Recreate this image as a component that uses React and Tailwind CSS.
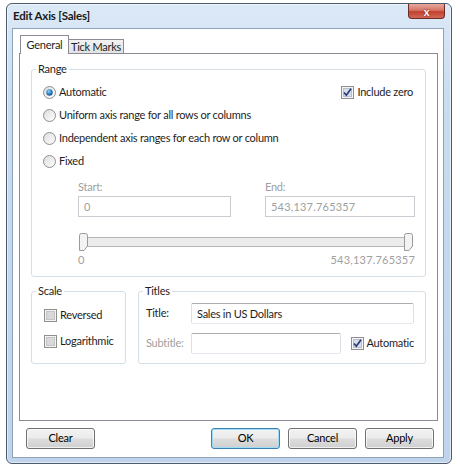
const FONT = "font-['Lato','Liberation_Sans',Arial,sans-serif]";

function Radio({ checked }) {
  return (
    <svg width="13" height="13" viewBox="0 0 13 13" className="shrink-0">
      <defs>
        <linearGradient id={checked ? "rg-on" : "rg-off"} x1="0" y1="0" x2="1" y2="1">
          <stop offset="0" stopColor="#dcdcdc" />
          <stop offset="1" stopColor="#ffffff" />
        </linearGradient>
        <radialGradient id="dot" cx="0.4" cy="0.35" r="0.7">
          <stop offset="0" stopColor="#9fd6f6" />
          <stop offset="0.5" stopColor="#2a8ad0" />
          <stop offset="1" stopColor="#1b4f80" />
        </radialGradient>
      </defs>
      <circle cx="6.5" cy="6.5" r="6" fill={`url(#${checked ? "rg-on" : "rg-off"})`} stroke="#8e8f8f" />
      {checked && <circle cx="6.5" cy="6.5" r="3.2" fill="url(#dot)" />}
    </svg>
  );
}

function Check({ checked }) {
  return (
    <svg width="13" height="13" viewBox="0 0 13 13" className="shrink-0">
      <rect x="0.5" y="0.5" width="12" height="12" fill="#f4f4f4" stroke="#8e8f8f" />
      <rect x="2.5" y="2.5" width="8" height="8" fill={checked ? "#d7dde8" : "#d9d9d9"} stroke={checked ? "#b6bfce" : "#c4c4c4"} />
      {checked && (
        <path d="M3 6.5 L5.3 9.2 L10 2.8" fill="none" stroke="#253a7a" strokeWidth="1.7" />
      )}
    </svg>
  );
}

function Thumb() {
  return (
    <svg width="9" height="18" viewBox="0 0 9 18">
      <path
        d="M0.5 2.5 Q0.5 0.5 2.5 0.5 H6.5 Q8.5 0.5 8.5 2.5 V13 L5 17.5 H0.5 Z"
        fill="#f3f3f3"
        stroke="#9a9a9a"
      />
    </svg>
  );
}

function Button({ children, primary }) {
  return (
    <button
      className={`w-[69px] h-[21px] rounded-[3px] border text-[11px] text-black bg-[linear-gradient(180deg,#f2f2f2_0%,#ebebeb_48%,#dddddd_52%,#cfcfcf_100%)] ${
        primary ? "border-[#3c7fb1] shadow-[inset_0_0_0_1px_#9fdcf5]" : "border-[#707070] shadow-[inset_0_0_0_1px_rgba(255,255,255,0.7)]"
      }`}
    >
      {children}
    </button>
  );
}

function Group({ label, className, children }) {
  return (
    <fieldset className={`min-w-0 border border-[#d5dfe5] rounded-[3px] ${className}`}>
      <legend className="ml-[4px] px-[2px] leading-[16px]">{label}</legend>
      {children}
    </fieldset>
  );
}

export default function App() {
  return (
    <div className={`w-[460px] h-[470px] bg-white pl-[6px] pt-[3px] text-[11px] tracking-[-0.25px] text-[#1e1e1e] ${FONT}`}>
      <div className="w-[446px] h-[461px] rounded-[6px] border border-[#4b5a6b] bg-[linear-gradient(180deg,#dce9f7_0%,#c9dcf0_20%,#bfd4eb_100%)] shadow-[inset_0_0_0_1px_rgba(255,255,255,0.55)] flex flex-col pl-[5px] pr-[7px] pb-[5px]">
        {/* title bar */}
        <div className="h-[24px] flex justify-between items-start shrink-0">
          <span className="pl-[1px] pt-[5px] leading-[14px] text-[11.5px] tracking-[-0.2px] font-bold text-[#1a1a1a]">
            Edit Axis [Sales]
          </span>
          <div className="w-[37px] h-[15px] mr-[-1px] rounded-b-[4px] border border-t-0 border-[#6c2b24] bg-[linear-gradient(180deg,#e8a89d_0%,#d47467_45%,#c2402f_55%,#d16a55_100%)] flex items-center justify-center">
            <span className="text-white font-bold text-[11px] leading-[11px] [text-shadow:0_0_2px_#5a1a14]">x</span>
          </div>
        </div>

        {/* client area */}
        <div className="flex-1 border border-[#8ea2b8] bg-white flex flex-col pt-[6px] pl-[6px] pr-[5px] pb-[8px]">
          {/* tabs */}
          <div className="h-[19px] mb-[-1px] flex items-end pl-[1px] whitespace-nowrap">
            <div className="relative z-10 w-[49px] h-[19px] border border-b-0 border-[#898c95] bg-white text-center leading-[17px]">
              General
            </div>
            <div className="ml-[-1px] mb-[1px] w-[56px] h-[14px] border border-b-0 border-[#898c95] bg-[linear-gradient(180deg,#f2f2f2,#e3e3e3)] text-center leading-[14px]">
              Tick Marks
            </div>
          </div>

          {/* panel */}
          <div className="h-[368px] border border-[#898c95] bg-white pt-[7px] px-[11px]">
            <Group label="Range" className="pb-[9px]">
              <div className="pt-[6px] pl-[11px] pr-[12px] flex flex-col gap-[5px]">
                <div className="h-[18px] flex items-center justify-between">
                  <label className="flex items-center gap-[3px]">
                    <Radio checked />
                    <span>Automatic</span>
                  </label>
                  <label className="flex items-center gap-[3px]">
                    <Check checked />
                    <span>Include zero</span>
                  </label>
                </div>
                <label className="h-[18px] flex items-center gap-[3px]">
                  <Radio />
                  <span>Uniform axis range for all rows or columns</span>
                </label>
                <label className="h-[18px] flex items-center gap-[3px]">
                  <Radio />
                  <span>Independent axis ranges for each row or column</span>
                </label>
                <label className="h-[18px] flex items-center gap-[3px]">
                  <Radio />
                  <span>Fixed</span>
                </label>
              </div>

              <div className="mt-[10px] ml-[46px] mr-[10px] flex gap-[34px]">
                <div className="w-[153px]">
                  <div className="h-[14px] leading-[14px] text-[#a0a0a0]">Start:</div>
                  <div className="mt-[2px] h-[21px] border border-[#c9ccd1] px-[5px] leading-[19px] text-[#a0a0a0]">0</div>
                </div>
                <div className="flex-1">
                  <div className="h-[14px] leading-[14px] text-[#a0a0a0]">End:</div>
                  <div className="mt-[2px] h-[21px] border border-[#c9ccd1] px-[5px] leading-[19px] text-[#a0a0a0] tracking-[0.2px]">
                    543,137.765357
                  </div>
                </div>
              </div>

              <div className="relative mt-[16px] ml-[47px] mr-[12px] h-[18px]">
                <div className="absolute left-[1px] right-0 top-[4px] h-[10px] border border-[#b5b5b5] bg-[#ececec]" />
                <div className="absolute left-0 top-0">
                  <Thumb />
                </div>
                <div className="absolute right-0 top-0">
                  <Thumb />
                </div>
              </div>

              <div className="mt-[2px] ml-[46px] mr-[10px] h-[14px] leading-[14px] flex justify-between text-[#a0a0a0] tracking-[0.2px]">
                <span>0</span>
                <span>543,137.765357</span>
              </div>
            </Group>

            <div className="mt-[6px] flex gap-[12px]">
              <Group label="Scale" className="w-[95px] h-[81px] shrink-0">
                <div className="pt-[7px] pl-[12px] flex flex-col gap-[8px]">
                  <label className="h-[18px] flex items-center gap-[3px]">
                    <Check />
                    <span>Reversed</span>
                  </label>
                  <label className="h-[18px] flex items-center gap-[3px]">
                    <Check />
                    <span>Logarithmic</span>
                  </label>
                </div>
              </Group>

              <Group label="Titles" className="w-[288px] h-[81px] shrink-0">
                <div className="pt-[4px] pl-[7px] pr-[11px] flex flex-col gap-[9px]">
                  <div className="flex items-center">
                    <span className="w-[45px]">Title:</span>
                    <div className="flex-1 h-[21px] border border-[#abadb3] border-l-[#dbdfe6] border-r-[#dbdfe6] border-b-[#e3e9ef] rounded-[2px] px-[5px] leading-[19px]">
                      Sales in US Dollars
                    </div>
                  </div>
                  <div className="flex items-center">
                    <span className="w-[45px] text-[#a0a0a0]">Subtitle:</span>
                    <div className="w-[151px] h-[21px] border border-[#abadb3] border-l-[#dbdfe6] border-r-[#dbdfe6] border-b-[#e3e9ef] rounded-[2px]" />
                    <label className="ml-[10px] flex items-center gap-[2px]">
                      <Check checked />
                      <span>Automatic</span>
                    </label>
                  </div>
                </div>
              </Group>
            </div>
          </div>

          {/* buttons */}
          <div className="mt-[7px] flex items-center pl-[7px] pr-[4px]">
            <Button>Clear</Button>
            <div className="flex-1" />
            <div className="flex gap-[8px]">
              <Button primary>OK</Button>
              <Button>Cancel</Button>
              <Button>Apply</Button>
            </div>
          </div>
        </div>
      </div>
    </div>
  );
}
